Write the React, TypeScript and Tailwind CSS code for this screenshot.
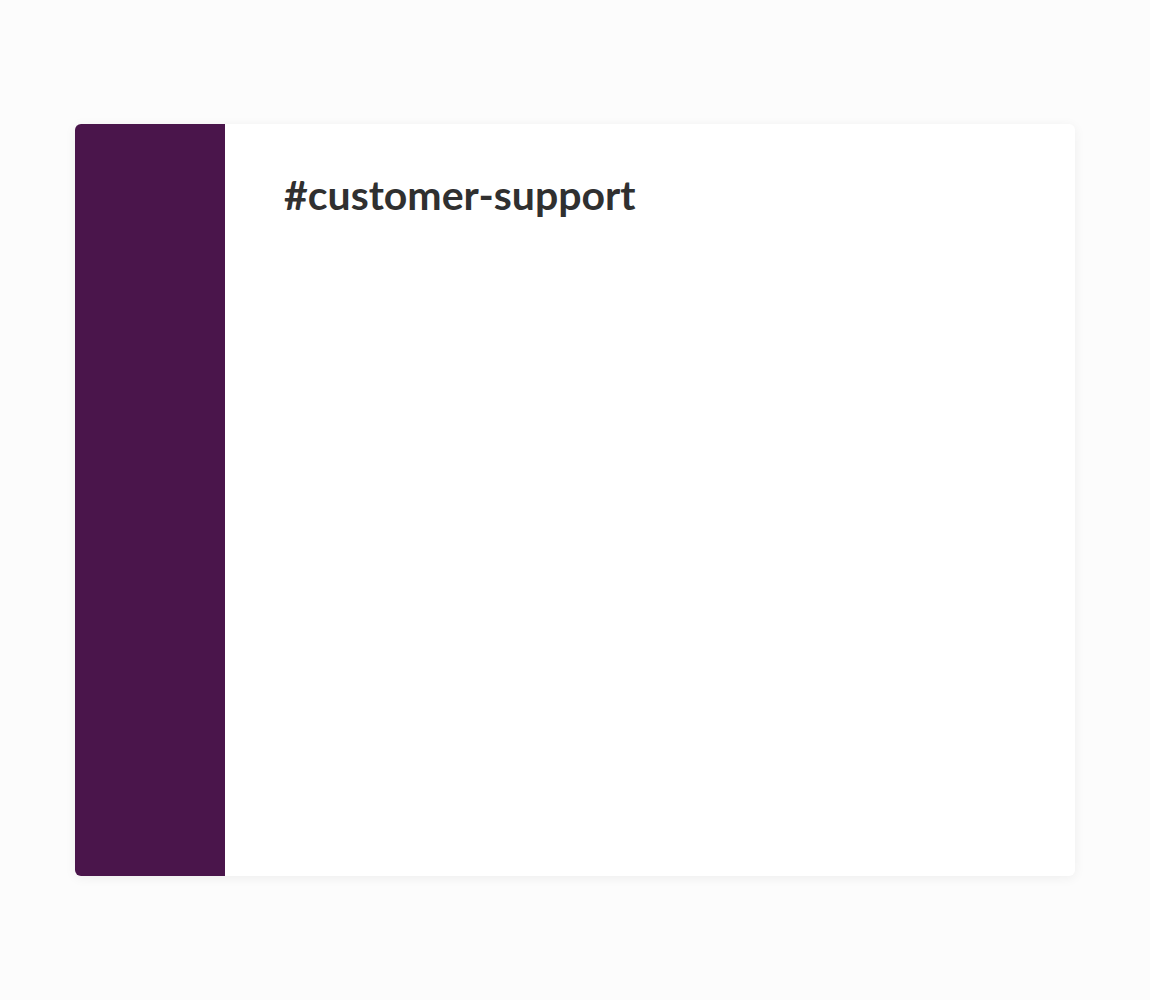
export default function App() {
  return (
    <div className="min-h-screen w-full bg-[#fcfcfc] pt-[124px] pl-[75px]">
      <div className="flex h-[752px] w-[1000px] overflow-hidden rounded-md bg-white shadow-[0_2px_12px_rgba(0,0,0,0.06)]">
        <div className="w-[150px] shrink-0 bg-[#4a154b]" />
        <div className="flex-1 pl-[59px] pt-[47px]">
          <h1
            className="text-[41px] font-bold leading-[48px] text-[#303030]"
            style={{ fontFamily: "Lato, 'Noto Sans', sans-serif" }}
          >
            #customer-support
          </h1>
        </div>
      </div>
    </div>
  );
}
